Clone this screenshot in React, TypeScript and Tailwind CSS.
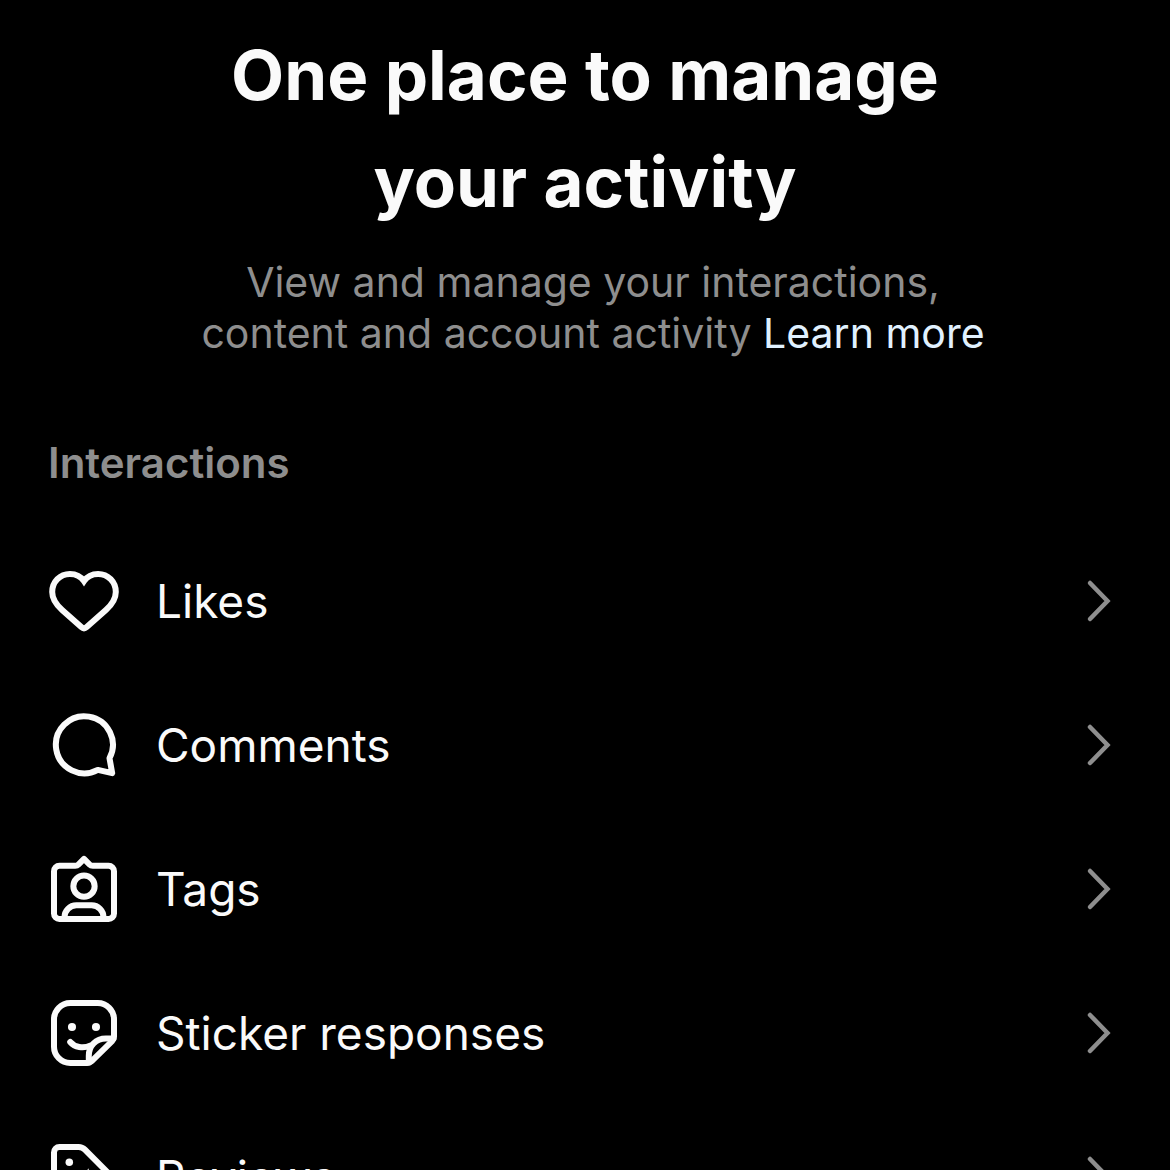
import React from 'react';

const HeartIcon: React.FC = () => (
  <path
    d="M12 5.4C11 3.9 9.3 3 7.3 3C4 3 1.4 5.6 1.4 9C1.4 11.5 2.7 13.2 4.7 15L11.1 20.7Q12 21.5 12.9 20.7L19.3 15C21.3 13.2 22.6 11.5 22.6 9C22.6 5.6 20 3 16.7 3C14.7 3 13 3.9 12 5.4Z"
    strokeLinejoin="miter"
  />
);

const CommentIcon: React.FC = () => (
  <path d="M20.5 16.4A9.5 9.5 0 1 0 16.6 20.3L21.4 21.4Z" />
);

const TagIcon: React.FC = () => (
  <>
    <path d="M10.201 3.797 12 1.997l1.798 1.8a1.59 1.59 0 0 0 1.124.465h5.259A1.818 1.818 0 0 1 22 6.08v14.104a1.818 1.818 0 0 1-1.818 1.818H3.818A1.818 1.818 0 0 1 2 20.184V6.08a1.818 1.818 0 0 1 1.818-1.818h5.26a1.59 1.59 0 0 0 1.123-.465Z" />
    <path d="M18.5 22v-.6a3.95 3.95 0 0 0-3.95-3.95H9.45A3.95 3.95 0 0 0 5.5 21.4v.6" />
    <circle cx="12" cy="11.05" r="3.55" />
  </>
);

const StickerIcon: React.FC = () => (
  <>
    <path d="M13.11 22H7.417A5.417 5.417 0 0 1 2 16.583V7.417A5.417 5.417 0 0 1 7.417 2h9.166A5.417 5.417 0 0 1 22 7.417v5.836a2.083 2.083 0 0 1-.626 1.488l-6.808 6.664A2.083 2.083 0 0 1 13.11 22Z" />
    <path d="M13.6 21.8V19.6C13.6 16.2 16 13.8 19.3 13.8H21.8" />
    <path d="M7.4 15C8.9 16.8 11.7 17.3 14.2 16.2" />
    <circle cx="8" cy="10" r="1.35" fill="currentColor" stroke="none" />
    <circle cx="16" cy="10" r="1.35" fill="currentColor" stroke="none" />
  </>
);

const ReviewIcon: React.FC = () => (
  <>
    <path d="M2 11.5V3.8A1.8 1.8 0 0 1 3.8 2H10.2A3 3 0 0 1 12.3 2.9L21.2 11.8A2 2 0 0 1 21.2 14.6L14.6 21.2A2 2 0 0 1 11.8 21.2L2.9 12.9A3 3 0 0 1 2 11.5Z" />
    <circle cx="7.1" cy="7.1" r="1.25" fill="currentColor" stroke="none" />
    <path
      d="M13.4 9.1 14.4 11.5 16.8 11.8 15 13.4 15.5 15.8 13.4 14.6 11.3 15.8 11.8 13.4 10 11.8 12.4 11.5Z"
      fill="currentColor"
      stroke="none"
    />
  </>
);

const interactions = [
  { label: 'Likes', icon: HeartIcon },
  { label: 'Comments', icon: CommentIcon },
  { label: 'Tags', icon: TagIcon },
  { label: 'Sticker responses', icon: StickerIcon },
  { label: 'Reviews', icon: ReviewIcon },
];

const App: React.FC = () => {
  return (
    <main className="h-screen overflow-hidden bg-black px-12 pt-[22px] font-['Inter',sans-serif] text-[#fafafa]">
      <header className="text-center">
        <h1 className="mx-auto max-w-[800px] text-[69px] leading-[107px] font-bold">
          One place to manage your activity
        </h1>
        <p className="mx-auto mt-[21px] max-w-[820px] pl-4 text-[41px] leading-[51px] text-[#8e8e8e]">
          View and manage your interactions, content and account activity{' '}
          <a href="#" className="text-[#e0f1ff]">
            Learn more
          </a>
        </p>
      </header>

      <section>
        <h2 className="mt-[78px] text-[42px] leading-[52px] font-semibold text-[#8e8e8e]">
          Interactions
        </h2>
        <ul className="mt-10">
          {interactions.map(({ label, icon: Icon }) => (
            <li key={label}>
              <a href="#" className="flex h-36 items-center">
                <svg
                  className="size-[72px] shrink-0"
                  viewBox="0 0 24 24"
                  fill="none"
                  stroke="currentColor"
                  strokeWidth="2"
                  strokeLinecap="round"
                  strokeLinejoin="round"
                  aria-hidden="true"
                >
                  <Icon />
                </svg>
                <span className="ml-9 flex-1 text-[46px] leading-[60px]">{label}</span>
                <svg
                  className="mr-2 h-12 w-7 shrink-0 text-[#8e8e8e]"
                  viewBox="0 0 28 48"
                  fill="none"
                  stroke="currentColor"
                  strokeWidth="4.5"
                  strokeLinecap="round"
                  aria-hidden="true"
                >
                  <path d="M4 6 21.5 24 4 42" />
                </svg>
              </a>
            </li>
          ))}
        </ul>
      </section>
    </main>
  );
};

export default App;
